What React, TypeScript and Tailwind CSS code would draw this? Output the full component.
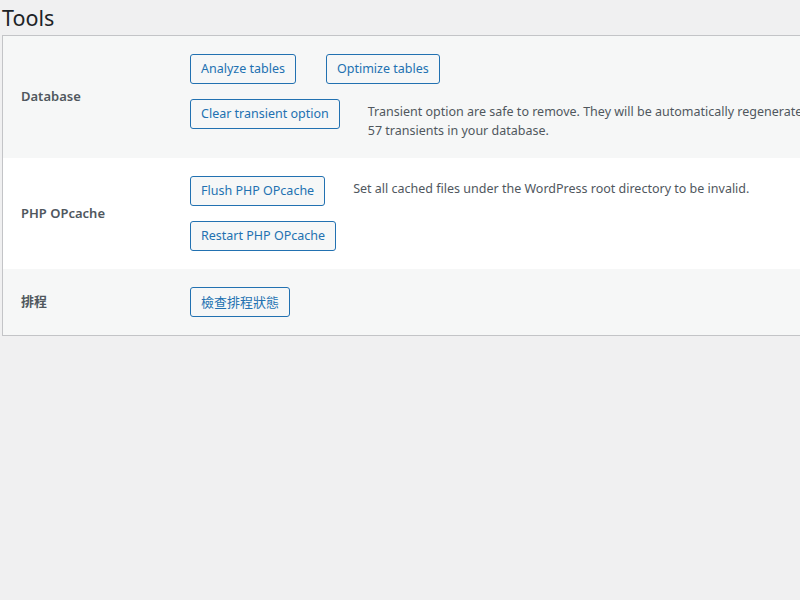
import React from "react";

const font = {
  fontFamily: '"Noto Sans", "Noto Sans CJK TC", sans-serif',
};

const Btn = ({ label, cjk }: { label: string; cjk?: boolean }) => (
  <button
    className={`h-[30px] px-[10px] rounded-[3px] border border-[#2271b1] bg-[#f6f7f7] text-[#2271b1] leading-[28px] whitespace-nowrap ${
      cjk ? "text-[13px]" : "text-[12.5px]"
    }`}
  >
    {label}
  </button>
);

const Row = ({
  title,
  striped,
  children,
}: {
  title: string;
  striped?: boolean;
  children: React.ReactNode;
}) => (
  <div className={`flex ${striped ? "bg-[#f6f7f7]" : "bg-white"}`}>
    <div className="w-[187px] shrink-0 pl-[18px] flex items-center text-[13px] font-semibold text-[#50575e]">
      {title}
    </div>
    <div className="flex-1 py-[18px] flex flex-col gap-[15px]">{children}</div>
  </div>
);

export default function App() {
  return (
    <div className="min-h-[600px] bg-[#f0f0f1] pl-[2px] overflow-hidden" style={font}>
      <h1 className="text-[21.5px] leading-[29px] pt-[3px] mb-[3px] text-[#1d2327] font-normal">
        Tools
      </h1>
      <div className="border border-[#c3c4c7] border-r-0 w-[1200px]">
        <Row title="Database" striped>
          <div className="flex gap-[30px]">
            <Btn label="Analyze tables" />
            <Btn label="Optimize tables" />
          </div>
          <div className="flex items-start gap-[28px]">
            <Btn label="Clear transient option" />
            <p className="mt-[3px] text-[12.5px] leading-[19px] text-[#50575e] whitespace-nowrap">
              Transient option are safe to remove. They will be automatically regenerated as your plugins require them.
              <br />
              57 transients in your database.
            </p>
          </div>
        </Row>
        <Row title="PHP OPcache">
          <div className="flex items-start gap-[28px]">
            <Btn label="Flush PHP OPcache" />
            <p className="mt-[3px] text-[12.5px] leading-[19px] text-[#50575e] whitespace-nowrap">
              Set all cached files under the WordPress root directory to be invalid.
            </p>
          </div>
          <div className="flex">
            <Btn label="Restart PHP OPcache" />
          </div>
        </Row>
        <Row title="排程" striped>
          <div className="flex">
            <Btn label="檢查排程狀態" cjk />
          </div>
        </Row>
      </div>
    </div>
  );
}
